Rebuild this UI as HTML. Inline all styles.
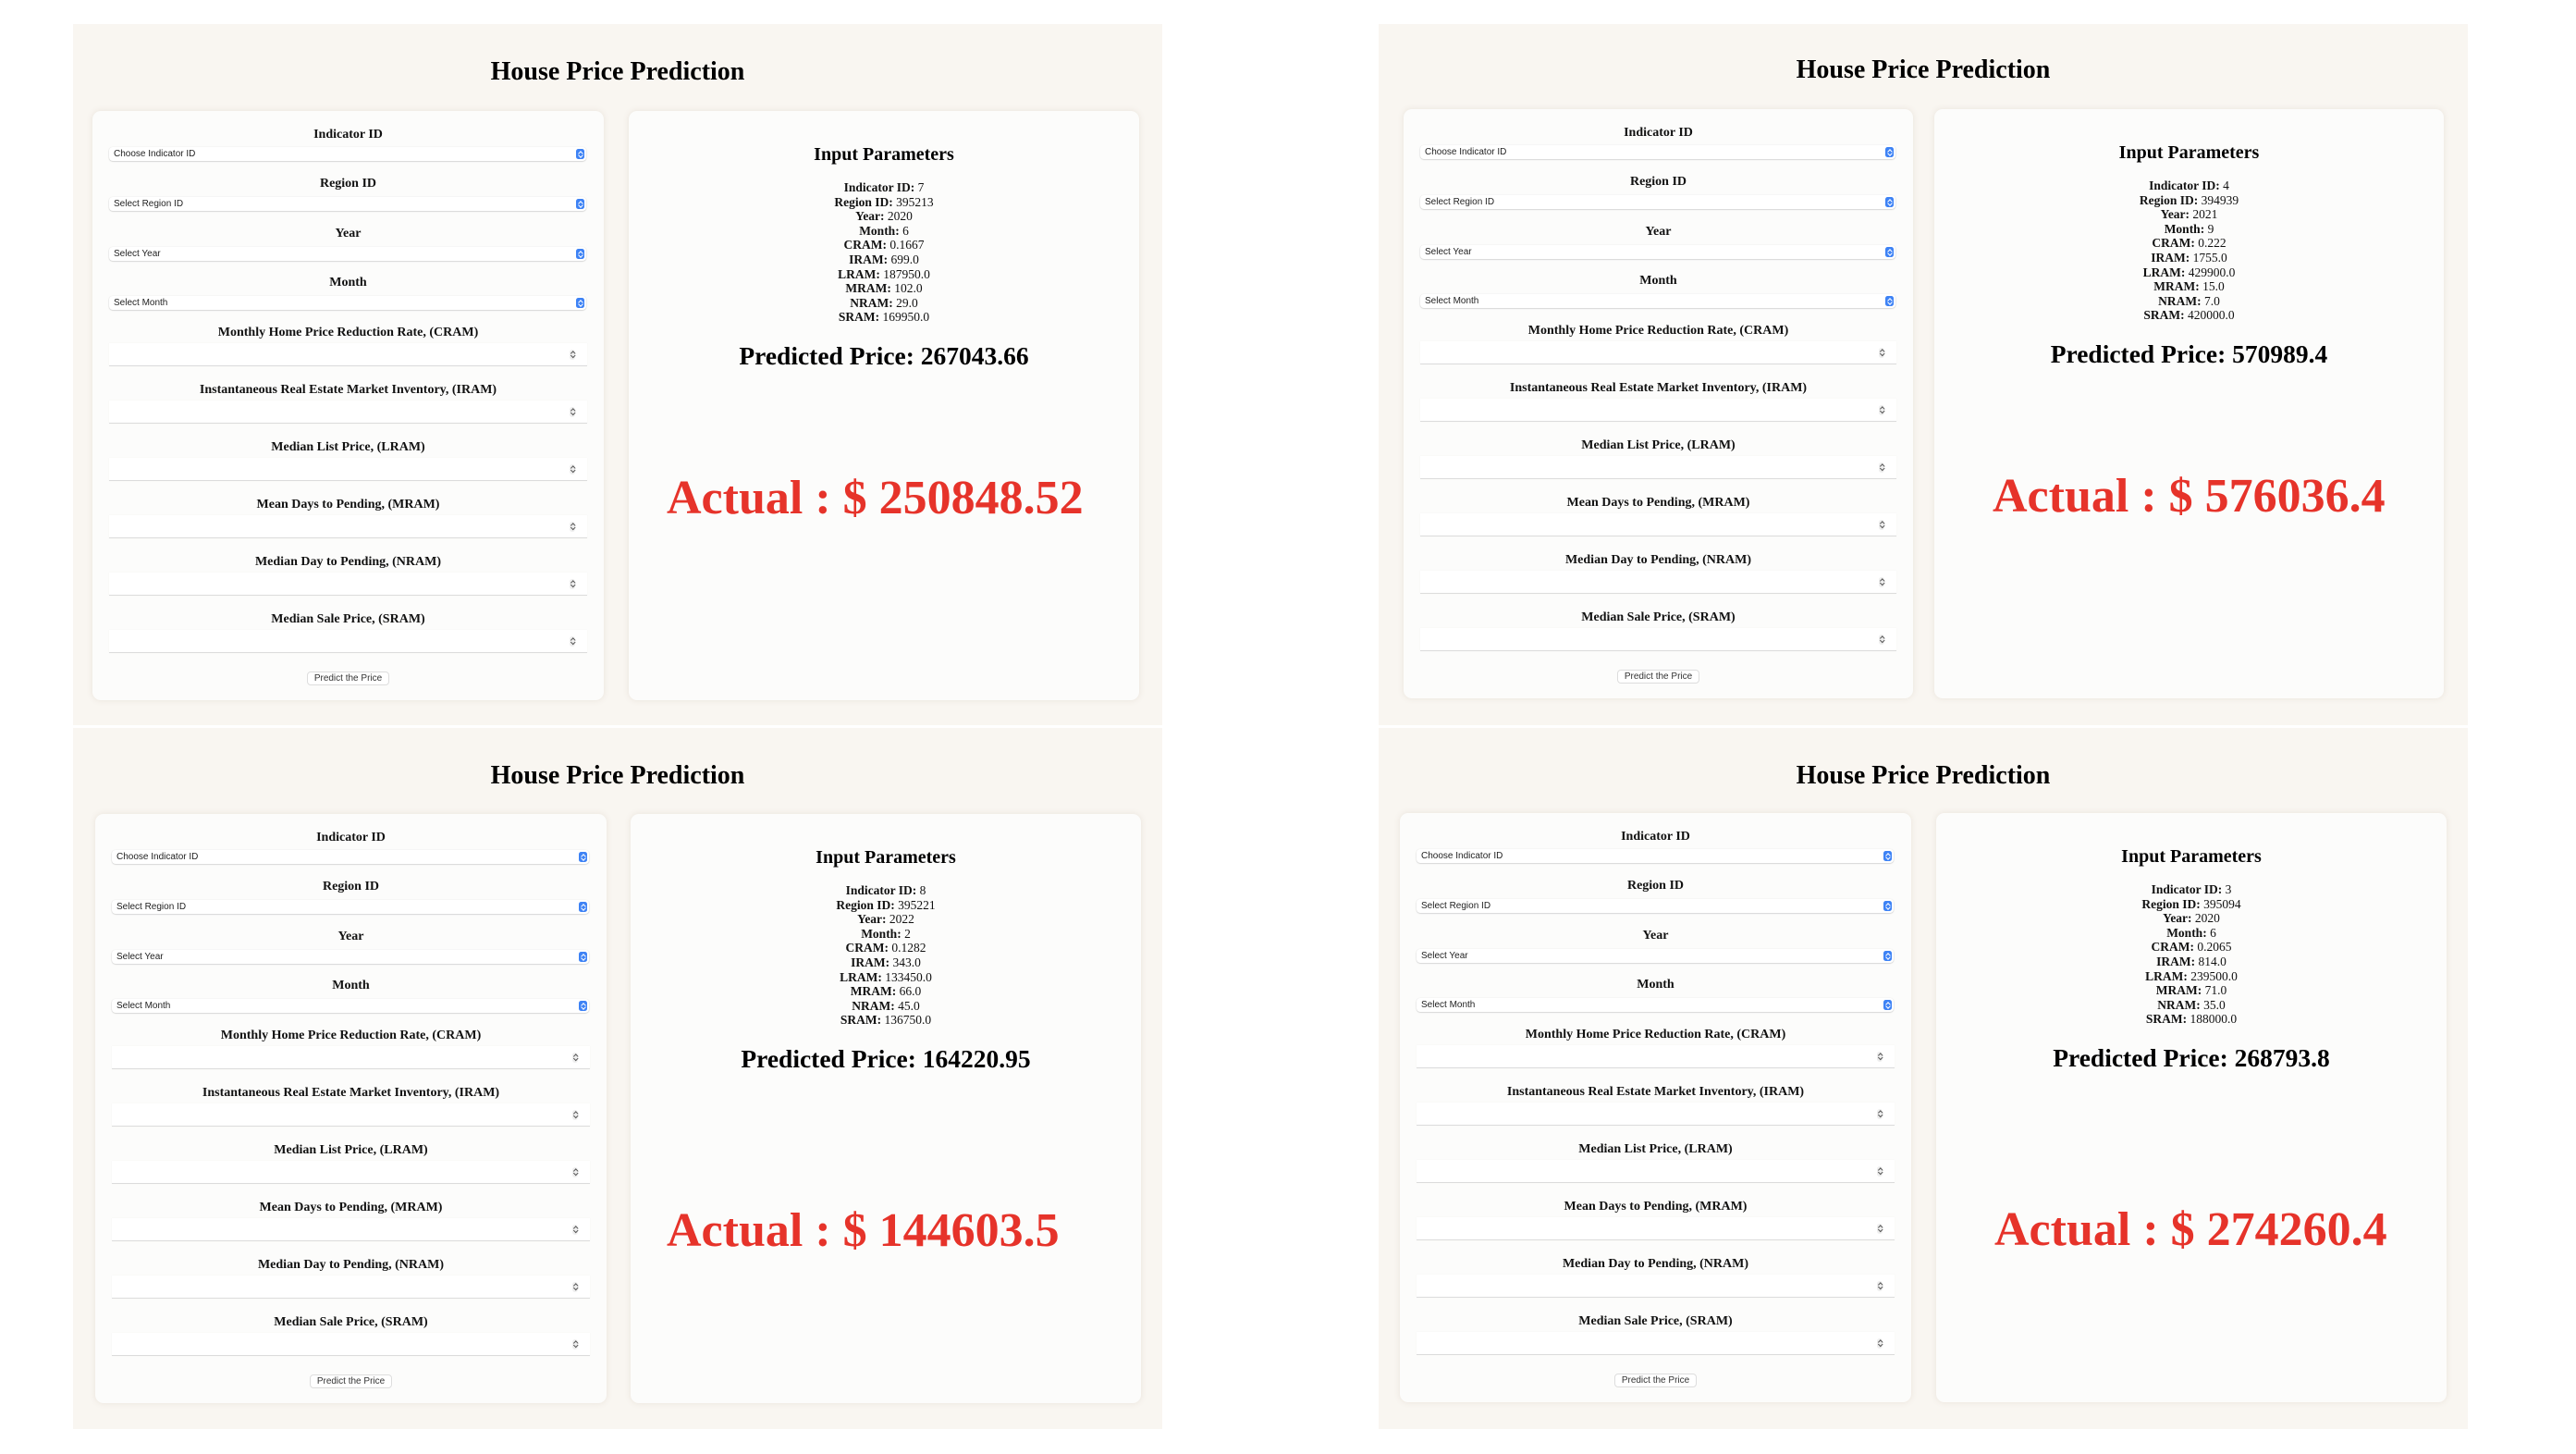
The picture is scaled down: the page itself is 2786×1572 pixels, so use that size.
<!DOCTYPE html>
<html><head><meta charset="utf-8">
<style>
*{box-sizing:border-box;margin:0;padding:0}
html,body{width:2786px;height:1572px;background:#fff;overflow:hidden;position:relative}
.panel{position:absolute;width:1178px;height:758px;background:#f9f6f1}
.title{position:absolute;left:0;width:100%;top:35px;text-align:center;font:bold 28px/34px "Liberation Serif",serif;color:#000}
.card{position:absolute;top:94px;width:553px;height:637px;background:#fcfcfb;border-radius:9px;box-shadow:0 0 7px rgba(120,100,80,0.13)}
.lbl{position:absolute;left:0;width:100%;text-align:center;font:bold 14px/18px "Liberation Serif",serif;color:#111;margin-top:1px}
.sel{position:absolute;left:18px;right:19px;height:15px;background:#fff;border-radius:4px;box-shadow:0 0.5px 1.5px rgba(0,0,0,0.25);font:10px/15px "Liberation Sans",sans-serif;color:#222;padding-left:5px}
.sel i{position:absolute;right:2px;top:2px;width:9px;height:11px;background:#3d82f5;border-radius:2.5px}
.sel i:before,.sel i:after{content:"";position:absolute;left:3px;width:3px;height:3px;border:solid #fff;border-width:1px 0 0 1px}
.sel i:before{top:2.5px;transform:rotate(45deg)}
.sel i:after{top:5px;transform:rotate(225deg)}
.num{position:absolute;left:18px;right:18px;height:25px;background:#fff;border-bottom:1.5px solid #dcdcdc;box-shadow:0 0 1px rgba(0,0,0,0.06)}
.num i{position:absolute;right:13px;top:7px;width:6px;height:11px;border-radius:3px;background:#eee}
.num i:before,.num i:after{content:"";position:absolute;left:1.5px;width:2.5px;height:2.5px;border:solid #555;border-width:1px 0 0 1px}
.num i:before{top:2px;transform:rotate(45deg)}
.num i:after{top:5px;transform:rotate(225deg)}
.btn{position:absolute;left:232px;width:89px;height:15px;top:606px;background:#fff;border:1px solid #ddd;border-radius:4px;font:10px/13px "Liberation Sans",sans-serif;color:#333;text-align:center}
.ip{position:absolute;left:0;width:100%;top:35px;text-align:center;font:bold 20px/24px "Liberation Serif",serif}
.params{position:absolute;left:0;width:100%;top:75px;text-align:center;font:13.5px/15.6px "Liberation Serif",serif;color:#111}
.params b{font-weight:bold}
.pred{position:absolute;left:0;width:100%;top:248px;text-align:center;font:bold 27.5px/34px "Liberation Serif",serif}
.act{position:absolute;top:388px;white-space:nowrap;font:bold 52px/62px "Liberation Serif",serif;color:#e6332a}
</style></head><body>

<!-- TL -->
<div class="panel" style="left:79px;top:26px">
<div class="title">House Price Prediction</div>
<div class="card" style="left:21px">
<div class="lbl" style="top:16px">Indicator ID</div><div class="sel" style="top:39px">Choose Indicator ID<i></i></div>
<div class="lbl" style="top:69px">Region ID</div><div class="sel" style="top:93px">Select Region ID<i></i></div>
<div class="lbl" style="top:123px">Year</div><div class="sel" style="top:147px">Select Year<i></i></div>
<div class="lbl" style="top:176px">Month</div><div class="sel" style="top:200px">Select Month<i></i></div>
<div class="lbl" style="top:230px">Monthly Home Price Reduction Rate, (CRAM)</div><div class="num" style="top:251px"><i></i></div>
<div class="lbl" style="top:292px">Instantaneous Real Estate Market Inventory, (IRAM)</div><div class="num" style="top:313px"><i></i></div>
<div class="lbl" style="top:354px">Median List Price, (LRAM)</div><div class="num" style="top:375px"><i></i></div>
<div class="lbl" style="top:416px">Mean Days to Pending, (MRAM)</div><div class="num" style="top:437px"><i></i></div>
<div class="lbl" style="top:478px">Median Day to Pending, (NRAM)</div><div class="num" style="top:499px"><i></i></div>
<div class="lbl" style="top:540px">Median Sale Price, (SRAM)</div><div class="num" style="top:561px"><i></i></div>
<div class="btn">Predict the Price</div>
</div>
<div class="card" style="left:601px;width:552px">
<div class="ip">Input Parameters</div>
<div class="params"><b>Indicator ID:</b> 7<br><b>Region ID:</b> 395213<br><b>Year:</b> 2020<br><b>Month:</b> 6<br><b>CRAM:</b> 0.1667<br><b>IRAM:</b> 699.0<br><b>LRAM:</b> 187950.0<br><b>MRAM:</b> 102.0<br><b>NRAM:</b> 29.0<br><b>SRAM:</b> 169950.0</div>
<div class="pred">Predicted Price: 267043.66</div>
<div class="act" style="left:41px">Actual : $ 250848.52</div>
</div>
</div>

<!-- TR -->
<div class="panel" style="left:1491px;top:26px">
<div class="title" style="top:33px">House Price Prediction</div>
<div class="card" style="left:27px;top:92px;width:551px">
<div class="lbl" style="top:16px">Indicator ID</div><div class="sel" style="top:39px">Choose Indicator ID<i></i></div>
<div class="lbl" style="top:69px">Region ID</div><div class="sel" style="top:93px">Select Region ID<i></i></div>
<div class="lbl" style="top:123px">Year</div><div class="sel" style="top:147px">Select Year<i></i></div>
<div class="lbl" style="top:176px">Month</div><div class="sel" style="top:200px">Select Month<i></i></div>
<div class="lbl" style="top:230px">Monthly Home Price Reduction Rate, (CRAM)</div><div class="num" style="top:251px"><i></i></div>
<div class="lbl" style="top:292px">Instantaneous Real Estate Market Inventory, (IRAM)</div><div class="num" style="top:313px"><i></i></div>
<div class="lbl" style="top:354px">Median List Price, (LRAM)</div><div class="num" style="top:375px"><i></i></div>
<div class="lbl" style="top:416px">Mean Days to Pending, (MRAM)</div><div class="num" style="top:437px"><i></i></div>
<div class="lbl" style="top:478px">Median Day to Pending, (NRAM)</div><div class="num" style="top:499px"><i></i></div>
<div class="lbl" style="top:540px">Median Sale Price, (SRAM)</div><div class="num" style="top:561px"><i></i></div>
<div class="btn" style="left:231px">Predict the Price</div>
</div>
<div class="card" style="left:601px;top:92px;width:551px">
<div class="ip">Input Parameters</div>
<div class="params"><b>Indicator ID:</b> 4<br><b>Region ID:</b> 394939<br><b>Year:</b> 2021<br><b>Month:</b> 9<br><b>CRAM:</b> 0.222<br><b>IRAM:</b> 1755.0<br><b>LRAM:</b> 429900.0<br><b>MRAM:</b> 15.0<br><b>NRAM:</b> 7.0<br><b>SRAM:</b> 420000.0</div>
<div class="pred">Predicted Price: 570989.4</div>
<div class="act" style="left:63px">Actual : $ 576036.4</div>
</div>
</div>

<!-- BL -->
<div class="panel" style="left:79px;top:787px">
<div class="title">House Price Prediction</div>
<div class="card" style="left:24px;top:93px">
<div class="lbl" style="top:16px">Indicator ID</div><div class="sel" style="top:39px">Choose Indicator ID<i></i></div>
<div class="lbl" style="top:69px">Region ID</div><div class="sel" style="top:93px">Select Region ID<i></i></div>
<div class="lbl" style="top:123px">Year</div><div class="sel" style="top:147px">Select Year<i></i></div>
<div class="lbl" style="top:176px">Month</div><div class="sel" style="top:200px">Select Month<i></i></div>
<div class="lbl" style="top:230px">Monthly Home Price Reduction Rate, (CRAM)</div><div class="num" style="top:251px"><i></i></div>
<div class="lbl" style="top:292px">Instantaneous Real Estate Market Inventory, (IRAM)</div><div class="num" style="top:313px"><i></i></div>
<div class="lbl" style="top:354px">Median List Price, (LRAM)</div><div class="num" style="top:375px"><i></i></div>
<div class="lbl" style="top:416px">Mean Days to Pending, (MRAM)</div><div class="num" style="top:437px"><i></i></div>
<div class="lbl" style="top:478px">Median Day to Pending, (NRAM)</div><div class="num" style="top:499px"><i></i></div>
<div class="lbl" style="top:540px">Median Sale Price, (SRAM)</div><div class="num" style="top:561px"><i></i></div>
<div class="btn">Predict the Price</div>
</div>
<div class="card" style="left:603px;top:93px;width:552px">
<div class="ip">Input Parameters</div>
<div class="params"><b>Indicator ID:</b> 8<br><b>Region ID:</b> 395221<br><b>Year:</b> 2022<br><b>Month:</b> 2<br><b>CRAM:</b> 0.1282<br><b>IRAM:</b> 343.0<br><b>LRAM:</b> 133450.0<br><b>MRAM:</b> 66.0<br><b>NRAM:</b> 45.0<br><b>SRAM:</b> 136750.0</div>
<div class="pred">Predicted Price: 164220.95</div>
<div class="act" style="left:39px;top:420px">Actual : $ 144603.5</div>
</div>
</div>

<!-- BR -->
<div class="panel" style="left:1491px;top:787px">
<div class="title">House Price Prediction</div>
<div class="card" style="left:23px;top:92px">
<div class="lbl" style="top:16px">Indicator ID</div><div class="sel" style="top:39px">Choose Indicator ID<i></i></div>
<div class="lbl" style="top:69px">Region ID</div><div class="sel" style="top:93px">Select Region ID<i></i></div>
<div class="lbl" style="top:123px">Year</div><div class="sel" style="top:147px">Select Year<i></i></div>
<div class="lbl" style="top:176px">Month</div><div class="sel" style="top:200px">Select Month<i></i></div>
<div class="lbl" style="top:230px">Monthly Home Price Reduction Rate, (CRAM)</div><div class="num" style="top:251px"><i></i></div>
<div class="lbl" style="top:292px">Instantaneous Real Estate Market Inventory, (IRAM)</div><div class="num" style="top:313px"><i></i></div>
<div class="lbl" style="top:354px">Median List Price, (LRAM)</div><div class="num" style="top:375px"><i></i></div>
<div class="lbl" style="top:416px">Mean Days to Pending, (MRAM)</div><div class="num" style="top:437px"><i></i></div>
<div class="lbl" style="top:478px">Median Day to Pending, (NRAM)</div><div class="num" style="top:499px"><i></i></div>
<div class="lbl" style="top:540px">Median Sale Price, (SRAM)</div><div class="num" style="top:561px"><i></i></div>
<div class="btn">Predict the Price</div>
</div>
<div class="card" style="left:603px;top:92px;width:552px">
<div class="ip">Input Parameters</div>
<div class="params"><b>Indicator ID:</b> 3<br><b>Region ID:</b> 395094<br><b>Year:</b> 2020<br><b>Month:</b> 6<br><b>CRAM:</b> 0.2065<br><b>IRAM:</b> 814.0<br><b>LRAM:</b> 239500.0<br><b>MRAM:</b> 71.0<br><b>NRAM:</b> 35.0<br><b>SRAM:</b> 188000.0</div>
<div class="pred">Predicted Price: 268793.8</div>
<div class="act" style="left:63px;top:420px">Actual : $ 274260.4</div>
</div>
</div>

</body></html>
